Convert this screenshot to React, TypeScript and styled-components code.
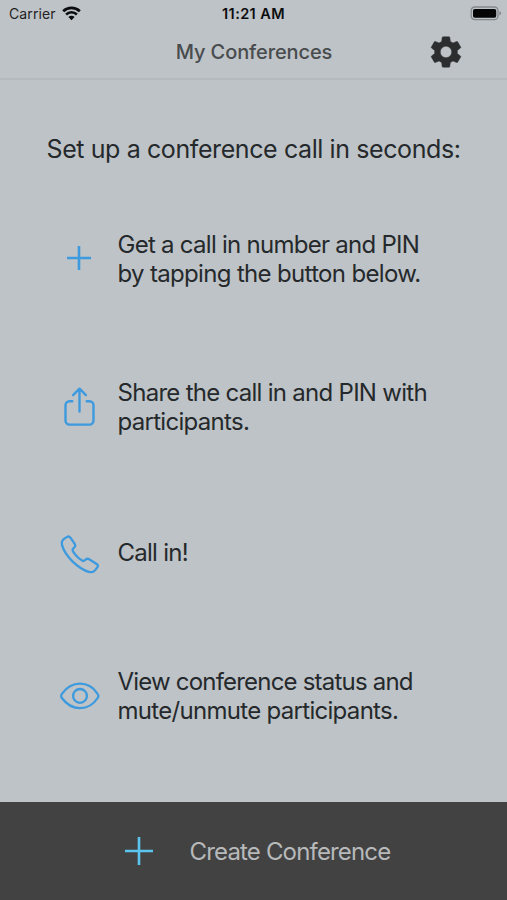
import React from "react";
import styled, { createGlobalStyle } from "styled-components";

const GlobalStyle = createGlobalStyle`
  *, *::before, *::after { box-sizing: border-box; }
  html, body { margin: 0; padding: 0; }
  body {
    background: #bec3c7;
    font-family: Inter, "Liberation Sans", sans-serif;
    -webkit-font-smoothing: antialiased;
  }
`;

const Screen = styled.div`
  display: flex;
  flex-direction: column;
  width: 507px;
  height: 900px;
  overflow: hidden;
  color: #25292c;
`;

const StatusBar = styled.header`
  display: grid;
  grid-template-columns: 1fr auto 1fr;
  align-items: center;
  height: 27px;
  padding: 0 5px 0 9px;
  color: #0c0d0e;
`;

const Carrier = styled.div`
  display: flex;
  align-items: center;
  gap: 6px;
  font-size: 14px;
  line-height: 18px;
  color: #1f2224;
`;

const Clock = styled.div`
  margin-right: 4px;
  font-size: 14.5px;
  font-weight: 600;
  line-height: 18px;
`;

const BatterySlot = styled.div`
  display: flex;
  justify-content: flex-end;
`;

const NavBar = styled.nav`
  display: grid;
  grid-template-columns: 1fr auto 1fr;
  align-items: center;
  height: 53px;
  padding: 0 42px 1px 43px;
  border-bottom: 2px solid #b3babe;
`;

const NavTitle = styled.h1`
  grid-column: 2;
  margin: 0;
  font-size: 20px;
  font-weight: 550;
  line-height: 24px;
  color: #494c4e;
`;

const GearButton = styled.button`
  display: flex;
  justify-self: end;
  padding: 0;
  border: 0;
  background: none;
  color: #2b2d2e;
`;

const Main = styled.main`
  flex: 1;
  display: flex;
  flex-direction: column;
`;

const Intro = styled.h2`
  margin: 53px 0 0 46.5px;
  font-size: 25px;
  font-weight: 400;
  line-height: 32px;
  white-space: nowrap;
`;

const Steps = styled.ul`
  margin: 0;
  padding: 0;
  list-style: none;
`;

const Step = styled.li<{ $gap: number }>`
  display: grid;
  grid-template-columns: 44px auto;
  column-gap: 16.5px;
  align-items: center;
  margin: ${(p) => p.$gap}px 0 0 57px;
`;

const StepIcon = styled.div<{ $lift?: number }>`
  display: flex;
  justify-content: center;
  padding-bottom: ${(p) => p.$lift ?? 0}px;
  color: #3d9ade;
`;

const StepText = styled.div<{ $lift?: number }>`
  padding-bottom: ${(p) => p.$lift ?? 0}px;
  font-size: 24px;
  line-height: 29px;
`;

const Line = styled.span<{ $track?: number }>`
  display: block;
  white-space: nowrap;
  letter-spacing: ${(p) => p.$track ?? 0}px;
`;

const CreateBar = styled.button`
  display: flex;
  align-items: center;
  gap: 36.5px;
  height: 98px;
  padding: 0 0 0 125px;
  border: 0;
  background: #424242;
  color: #b7b9ba;
  font: 400 24px/30px Inter, "Liberation Sans", sans-serif;
  text-align: left;
`;

const CreateIcon = styled.span`
  display: flex;
  color: #5bc5ee;
`;

const CreateLabel = styled.span`
  padding-top: 2px;
`;

const WifiIcon = () => (
  <svg width="19" height="15" viewBox="0 0 19 15" fill="none">
    <path d="M1.2 5.2a11.9 11.9 0 0 1 16.6 0" stroke="#0c0d0e" strokeWidth="2.8" />
    <path d="M4.1 8.500a7.600 7.600 0 0 1 10.800 0" stroke="#0c0d0e" strokeWidth="2.500" />
    <path d="M6.400 11.100a4.400 4.400 0 0 1 6.200 0l-3.100 3.200z" fill="#0c0d0e" />
  </svg>
);

const BatteryIcon = () => (
  <svg width="32" height="15" viewBox="0 0 32 15">
    <rect x="1.2" y="1" width="26.8" height="12.6" rx="3.6" fill="none" stroke="#85898c" strokeWidth="1.3" />
    <rect x="3" y="2.9" width="23.2" height="8.8" rx="1.8" fill="#050505" />
    <path d="M29.3 5.2c1.2.3 1.8 1.2 1.8 2.1s-.6 1.8-1.8 2.1z" fill="#85898c" />
  </svg>
);

const GearIcon = () => (
  <svg width="38" height="38" viewBox="0 0 24 24" fill="currentColor" stroke="currentColor" strokeWidth="0.3">
    <path d="M19.14 12.94c.04-.3.06-.61.06-.94 0-.32-.02-.64-.07-.94l2.03-1.58a.49.49 0 0 0 .12-.61l-1.92-3.32a.488.488 0 0 0-.59-.22l-2.39.96c-.5-.38-1.03-.7-1.62-.94l-.36-2.54a.484.484 0 0 0-.48-.41h-3.84c-.24 0-.43.17-.47.41l-.36 2.54c-.59.24-1.13.57-1.62.94l-2.39-.96c-.22-.08-.47 0-.59.22L2.74 8.87c-.12.21-.08.47.12.61l2.03 1.58c-.05.3-.09.63-.09.94s.02.64.07.94l-2.03 1.58a.49.49 0 0 0-.12.61l1.92 3.32c.12.22.37.29.59.22l2.39-.96c.5.38 1.03.7 1.62.94l.36 2.54c.05.24.24.41.48.41h3.84c.24 0 .44-.17.47-.41l.36-2.54c.59-.24 1.13-.56 1.62-.94l2.39.96c.22.08.47 0 .59-.22l1.92-3.32c.12-.22.07-.47-.12-.61l-2.01-1.58zM12 15.6c-1.98 0-3.6-1.62-3.6-3.6s1.62-3.6 3.6-3.6 3.6 1.62 3.6 3.6-1.62 3.6-3.6 3.6z" />
  </svg>
);

const PlusIcon = ({ size, weight }: { size: number; weight: number }) => (
  <svg width={size} height={size} viewBox={`0 0 ${size} ${size}`} fill="none" stroke="currentColor" strokeWidth={weight}>
    <path d={`M0 ${size / 2}H${size}M${size / 2} 0V${size}`} />
  </svg>
);

const ShareIcon = () => (
  <svg width="31" height="40" viewBox="0 0 31 40" fill="none" stroke="currentColor" strokeWidth="2.4" strokeLinecap="round" strokeLinejoin="round">
    <path d="M8.3 14.2H5.5a4 4 0 0 0-4 4v15.4a4 4 0 0 0 4 4h20a4 4 0 0 0 4-4v-15.400a4 4 0 0 0-4-4H22.700" />
    <path d="M15.500 24.500V1.900M9.100 8.200L15.500 1.700 21.900 8.200" />
  </svg>
);

const PhoneIcon = () => (
  <svg width="40" height="40" viewBox="-1 0 40 40" fill="none" stroke="currentColor" strokeWidth="2.3" strokeLinejoin="round">
    <path d="M3.400 5.400L7 2.900C8.300 2.100 9.500 2.400 10.400 3.600L14.700 9.900C15.500 11.200 15.400 12.300 14.500 13.200L13.400 14.300C12.500 15.300 12.400 16.300 13 17.300C14.300 19.400 15.700 21.200 17.500 23C19.200 24.600 20.800 25.800 22.200 26.600C23.200 27.200 24.100 27 24.900 26.200L26 25.300C27 24.600 28 24.600 29.200 25.300L36.600 29.900C37.900 30.800 38.200 31.900 37.400 33.100L35.200 36.100C33.700 38 31.400 38.600 28.800 37.800C23.600 36.400 18.200 32.900 12.700 27.600C7.300 22.200 3.700 16.800 2.200 11.600C1.500 9 1.700 6.800 3.400 5.400z" />
  </svg>
);

const EyeIcon = () => (
  <svg width="42" height="28" viewBox="-1 0 42 28" fill="none" stroke="currentColor" strokeWidth="2.3" strokeLinejoin="round">
    <path d="M2.900 11.800C7.500 5.400 13.800 1.700 21 1.700S34.500 5.400 38.600 11.800Q40.100 13.900 38.600 16C34.500 22.400 28.200 26.100 21 26.100S7.500 22.400 2.900 16Q1.400 13.900 2.900 11.800z" />
    <circle cx="21" cy="13.9" r="6.9" />
  </svg>
);

export default function App() {
  return (
    <>
      <GlobalStyle />
      <Screen>
        <StatusBar>
          <Carrier>
            <Line $track={0.1}>Carrier</Line>
            <WifiIcon />
          </Carrier>
          <Clock>
            <Line $track={0.4}>11:21 AM</Line>
          </Clock>
          <BatterySlot>
            <BatteryIcon />
          </BatterySlot>
        </StatusBar>
        <NavBar>
          <NavTitle>
            <Line $track={-0.1}>My Conferences</Line>
          </NavTitle>
          <GearButton aria-label="Settings">
            <GearIcon />
          </GearButton>
        </NavBar>
        <Main>
          <Intro>
            <Line $track={-0.4}>Set up a conference call in seconds:</Line>
          </Intro>
          <Steps>
            <Step $gap={65}>
              <StepIcon $lift={2}>
                <PlusIcon size={24} weight={2.6} />
              </StepIcon>
              <StepText>
                <Line $track={-0.73}>Get a call in number and PIN</Line>
                <Line $track={-0.67}>by tapping the button below.</Line>
              </StepText>
            </Step>
            <Step $gap={90}>
              <StepIcon>
                <ShareIcon />
              </StepIcon>
              <StepText>
                <Line $track={-0.72}>Share the call in and PIN with</Line>
                <Line $track={-0.7}>participants.</Line>
              </StepText>
            </Step>
            <Step $gap={98}>
              <StepIcon>
                <PhoneIcon />
              </StepIcon>
              <StepText $lift={4}>
                <Line $track={-0.75}>Call in!</Line>
              </StepText>
            </Step>
            <Step $gap={93}>
              <StepIcon $lift={1}>
                <EyeIcon />
              </StepIcon>
              <StepText>
                <Line $track={-0.8}>View conference status and</Line>
                <Line $track={-0.7}>mute/unmute participants.</Line>
              </StepText>
            </Step>
          </Steps>
        </Main>
        <CreateBar>
          <CreateIcon>
            <PlusIcon size={28} weight={2.6} />
          </CreateIcon>
          <CreateLabel>
            <Line $track={-0.83}>Create Conference</Line>
          </CreateLabel>
        </CreateBar>
      </Screen>
    </>
  );
}
